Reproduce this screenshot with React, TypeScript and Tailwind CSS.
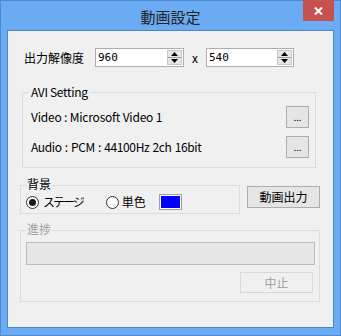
import React from "react";

const font = { fontFamily: '"Noto Sans CJK JP", "Noto Sans", sans-serif' };

function Spin({ value, w }: { value: string; w: string }) {
  return (
    <div className={`${w} h-[19px] flex items-center bg-white border border-[#abadb3]`}>
      <span className="flex-1 pl-[2px] leading-none text-black" style={{ fontFamily: '"DejaVu Sans Mono", monospace', fontSize: 11 }}>{value}</span>
      <div className="w-[15px] h-[15px] mr-[1px] flex flex-col border border-[#c7c7c7] bg-[#e6e6e6]">
        <div className="flex-1 flex items-center justify-center border-b border-[#a0a0a0]">
          <svg width="7" height="4" viewBox="0 0 7 4"><path d="M3.5 0L7 4H0z" fill="#000" /></svg>
        </div>
        <div className="flex-1 flex items-center justify-center">
          <svg width="7" height="4" viewBox="0 0 7 4"><path d="M0 0H7L3.5 4z" fill="#000" /></svg>
        </div>
      </div>
    </div>
  );
}

function Btn({ children, cls, disabled }: { children: React.ReactNode; cls: string; disabled?: boolean }) {
  return (
    <div
      className={`${cls} flex items-center justify-center border text-[12px] ${
        disabled ? "border-[#d9d9d9] bg-[#f0f0f0] text-[#a0a0a0]" : "border-[#adadad] bg-[#e5e5e5] text-black"
      }`}
    >
      {children}
    </div>
  );
}

export default function App() {
  return (
    <div className="w-[341px] h-[336px] bg-[#6aabf4] border border-[#4d8ad4] flex flex-col" style={font}>
      <div className="relative h-[29px] flex items-center justify-center">
        <span className="text-[15px] text-[#222] mt-[3px]">動画設定</span>
        <div className="absolute right-[6px] top-[-1px] w-[31px] h-[21px] bg-[#c75050] flex items-center justify-center">
          <svg width="9" height="8" viewBox="0 0 9 8">
            <path d="M1 0.5L8 7.5M8 0.5L1 7.5" stroke="#fff" strokeWidth="2" />
          </svg>
        </div>
      </div>
      <div className="ml-[6px] w-[327px] h-[298px] border border-[#4f86c6] bg-[#f0f0f0] flex flex-col text-[12px] text-black">
        <div className="flex items-center mt-[17px] h-[19px]">
          <span className="ml-[16px] w-[71px] text-[12px]">出力解像度</span>
          <Spin value="960" w="w-[89px]" />
          <span className="w-[22px] text-center text-[12px]">x</span>
          <Spin value="540" w="w-[88px]" />
        </div>
        <div className="relative ml-[14px] mt-[25px] w-[294px] h-[76px] border border-[#dcdcdc]">
          <span className="absolute left-[6px] top-[-10px] bg-[#f0f0f0] px-[2px] leading-[18px] tracking-[-0.3px]">AVI Setting</span>
          <div className="flex items-center mt-[13px] h-[22px]">
            <span className="ml-[8px] flex-1 tracking-[-0.2px]">Video : Microsoft Video 1</span>
            <Btn cls="w-[23px] h-[22px] mr-[6px]"><span className="text-[9px] leading-none">...</span></Btn>
          </div>
          <div className="flex items-center mt-[8px] h-[22px]">
            <span className="ml-[8px] flex-1 tracking-[-0.4px] [word-spacing:1px]">Audio : PCM : 44100Hz 2ch 16bit</span>
            <Btn cls="w-[23px] h-[22px] mr-[6px]"><span className="text-[9px] leading-none">...</span></Btn>
          </div>
        </div>
        <div className="flex items-start mt-[17px]">
          <div className="relative ml-[12px] w-[220px] h-[29px] border border-[#dcdcdc]">
            <span className="absolute left-[5px] top-[-11px] bg-[#f0f0f0] px-[1px] leading-[18px] text-[12px]">背景</span>
            <div className="flex items-center mt-[8px] h-[16px]">
              <div className="ml-[5px] w-[13px] h-[13px] rounded-full border border-[#333] bg-white flex items-center justify-center">
                <div className="w-[7px] h-[7px] rounded-full bg-[#1a1a1a]" />
              </div>
              <span className="ml-[4px] text-[12px] tracking-[-2px]">ステージ</span>
              <div className="ml-[23px] w-[13px] h-[13px] rounded-full border border-[#333] bg-white" />
              <span className="ml-[3px] text-[12px]">単色</span>
              <div className="ml-[13px] w-[23px] h-[16px] border border-[#a0a0a0] bg-white p-[1px] flex">
                <div className="flex-1 bg-[#0000ff]" />
              </div>
            </div>
          </div>
          <Btn cls="ml-[7px] mt-[1px] w-[73px] h-[22px]"><span className="text-[12px]">動画出力</span></Btn>
        </div>
        <div className="relative ml-[12px] mt-[16px] w-[300px] h-[72px] border border-[#dcdcdc]">
          <span className="absolute left-[5px] top-[-11px] bg-[#f0f0f0] px-[1px] leading-[18px] text-[12px] text-[#a0a0a0]">進捗</span>
          <div className="ml-[5px] mt-[11px] w-[289px] h-[23px] border border-[#bcbcbc] bg-[#e6e6e6]" />
          <div className="flex justify-end mt-[7px] mr-[6px]">
            <Btn cls="w-[73px] h-[21px]" disabled><span className="text-[12px]">中止</span></Btn>
          </div>
        </div>
      </div>
    </div>
  );
}
